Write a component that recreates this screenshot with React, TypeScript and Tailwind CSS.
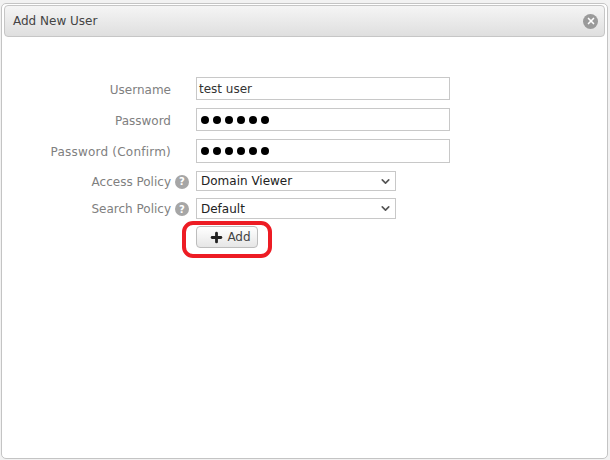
import { ChevronDown, Plus, X } from "lucide-react";

function Label({ text, help, wide }: { text: string; help?: boolean; wide?: boolean }) {
  return (
    <div className={`flex w-[196px] shrink-0 items-center justify-end pr-[1px] text-[12px] text-[#808080] ${wide || help ? "pt-[1px]" : "pt-[2px]"} ${wide ? "tracking-[0.22px]" : ""}`}>
      <span className={help ? "" : "pr-[24px]"}>{text}</span>
      {help && (
        <span className="ml-[4px] mr-[6px] flex size-[14px] items-center justify-center rounded-full bg-[#a6a6a6] text-[10px] font-bold text-white">
          ?
        </span>
      )}
    </div>
  );
}

function TextRow({ label, value, dots, wide, h, mt }: { label: string; value: string; dots?: boolean; wide?: boolean; h: string; mt: string }) {
  return (
    <div className={`flex items-center ${h} ${mt}`}>
      <Label text={label} wide={wide} />
      <div className="flex h-full w-[254px] items-center border border-[#c8c8c8] bg-white pl-[2px] text-[12px] text-[#333333]">
        {dots ? (
          <span className="flex gap-[4px] pl-[2px]">
            <i className="size-[8px] rounded-full bg-black" />
            <i className="size-[8px] rounded-full bg-black" />
            <i className="size-[8px] rounded-full bg-black" />
            <i className="size-[8px] rounded-full bg-black" />
            <i className="size-[8px] rounded-full bg-black" />
            <i className="size-[8px] rounded-full bg-black" />
          </span>
        ) : (
          value
        )}
      </div>
    </div>
  );
}

function SelectRow({ label, value, h, mt }: { label: string; value: string; h: string; mt: string }) {
  return (
    <div className={`flex items-center ${h} ${mt}`}>
      <Label text={label} help />
      <div className="flex h-full w-[200px] items-center justify-between border border-[#c8c8c8] bg-white pl-[4px] pr-[3px] text-[12px] text-[#222222]">
        {value}
        <ChevronDown size={13} strokeWidth={3} className="text-[#555555]" />
      </div>
    </div>
  );
}

export default function App() {
  return (
    <div className="h-[460px] w-[610px] overflow-hidden bg-[#f2f2f2] pl-[1px] pr-[2px] pt-[3px] font-['DejaVu_Sans',sans-serif]">
      <div className="h-[456px] rounded-[5px] border border-[#c4c4c4] bg-white px-[2px] pt-[1px]">
        <div className="flex h-[32px] items-center justify-between rounded-[4px] border border-[#c6c6c6] bg-gradient-to-b from-[#f5f5f5] to-[#dfdfdf] pl-[8px] pr-[6px] text-[12px] text-[#444444]">
          Add New User
          <span className="flex size-[15px] items-center justify-center rounded-full bg-[#9a9a9a]">
            <X size={10} strokeWidth={4} className="text-white" />
          </span>
        </div>
        <div className="relative -ml-[4px] pt-[40px]">
          <TextRow label="Username" value="test user" h="h-[23px]" mt="" />
          <TextRow label="Password" value="" dots h="h-[23px]" mt="mt-[8px]" />
          <TextRow label="Password (Confirm)" value="" dots wide h="h-[24px]" mt="mt-[8px]" />
          <SelectRow label="Access Policy" value="Domain Viewer" h="h-[20px]" mt="mt-[8px]" />
          <SelectRow label="Search Policy" value="Default" h="h-[21px]" mt="mt-[7px]" />
          <button className="ml-[196px] mt-[7px] flex h-[22px] w-[62px] items-center justify-center gap-[3px] rounded-[4px] border border-[#bdbdbd] bg-gradient-to-b from-white to-[#e6e6e6] pl-[6px] text-[12px] text-[#444444]">
            <Plus size={15} strokeWidth={4.5} className="text-[#222222]" />
            Add
          </button>
          <div className="absolute left-[182px] top-[184px] h-[37px] w-[90px] rounded-[11px] border-[4px] border-[#ed1c24]" />
        </div>
      </div>
    </div>
  );
}
